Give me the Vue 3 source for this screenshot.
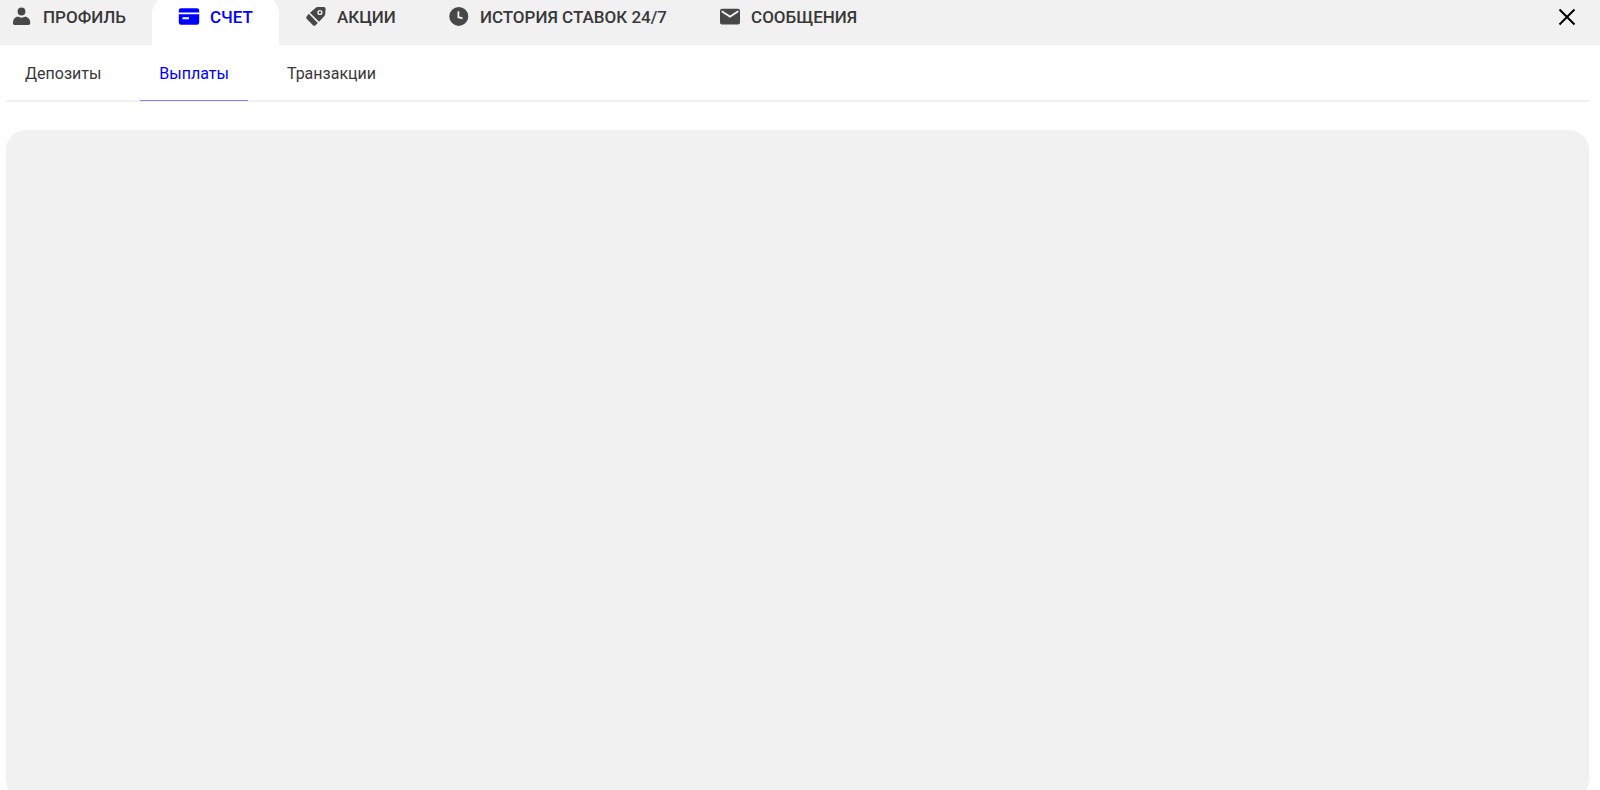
<template>
  <div class="account">
    <header class="header">
      <nav class="tabs">
        <a
          v-for="tab in tabs"
          :key="tab.id"
          href="#"
          class="tab"
          :class="{ active: tab.id === activeTab }"
          @click.prevent="activeTab = tab.id"
        >
          <svg class="tab-icon" viewBox="0 0 22 22" aria-hidden="true">
            <path :d="tab.icon" fill="currentColor" fill-rule="evenodd" />
          </svg>
          <span>{{ tab.label }}</span>
        </a>
      </nav>
      <button type="button" class="close" aria-label="Закрыть">
        <svg viewBox="0 0 18 18" aria-hidden="true">
          <path d="M1.5 1.5l15 15M16.5 1.5l-15 15" fill="none" stroke="currentColor" stroke-width="2" />
        </svg>
      </button>
    </header>

    <main class="content">
      <nav class="subtabs">
        <a
          v-for="item in subtabs"
          :key="item"
          href="#"
          class="subtab"
          :class="{ active: item === activeSubtab }"
          @click.prevent="activeSubtab = item"
        >{{ item }}</a>
      </nav>
      <section class="panel"></section>
    </main>
  </div>
</template>

<script setup>
import { ref } from 'vue'

const tabs = [
  {
    id: 'profile',
    label: 'ПРОФИЛЬ',
    icon: 'M10.500 1.600a3.900 3.900 0 1 1 0 7.800a3.900 3.900 0 0 1 0-7.800zM6.600 10.600Q10.500 12.800 14.400 10.600Q19.300 12 19.300 17.200Q19.300 19 17.500 19H3.700Q1.900 19 1.900 17.200Q1.900 12 6.600 10.600z'
  },
  {
    id: 'account',
    label: 'СЧЕТ',
    icon: 'M3 2.200h16q2.200 0 2.200 2.200v2h-20.400v-2q0-2.200 2.200-2.200zM.8 8.200h20.400v8.300q0 2.200-2.200 2.200h-16q-2.200 0-2.200-2.200zM4.500 11.200v2h6.500v-2z'
  },
  {
    id: 'promo',
    label: 'АКЦИИ',
    icon: 'M12.500 1L19 .9Q20.600 .9 20.600 2.500L20.200 8.200Q20 9.500 19 10.500L14 15.800L5 6.800L10.500 2Q11.500 1.100 12.500 1zM14.900 3.900a2.600 2.600 0 1 0 0 5.200a2.600 2.600 0 0 0 0-5.200zM14.900 5.300a1.200 1.200 0 1 1 0 2.400a1.200 1.200 0 0 1 0-2.400zM3.800 7.800L12.800 17L10.500 19.300Q9.300 20.400 8 19.300L1.600 12.700Q.7 11.600 1.600 10.400z'
  },
  {
    id: 'history',
    label: 'ИСТОРИЯ СТАВОК 24/7',
    icon: 'M10.800 .9a9.500 9.500 0 1 1 0 19a9.500 9.500 0 0 1 0-19zM9.500 5.200v6.700l5 1.300v-1.900l-3.200-.9v-5.200z'
  },
  {
    id: 'messages',
    label: 'СООБЩЕНИЯ',
    icon: 'M3 2.800H19q2 0 2 2V16.500q0 2-2 2H3q-2 0-2-2V4.800q0-2 2-2zM2.800 4.300L2.500 6.200l8.500 5.600L19.500 6.200L19.200 4.300L11 9.600z'
  }
]

const subtabs = ['Депозиты', 'Выплаты', 'Транзакции']

const activeTab = ref('account')
const activeSubtab = ref('Выплаты')
</script>

<style>
body {
  margin: 0;
  background: #fff;
}
</style>

<style scoped>
.account {
  display: flex;
  flex-direction: column;
  height: 100vh;
  overflow: hidden;
  font-family: Roboto, "Liberation Sans", sans-serif;
  font-size: 16px;
  line-height: 20px;
  color: #383838;
}

.header {
  display: flex;
  flex-shrink: 0;
  justify-content: space-between;
  height: 45px;
  padding-right: 24px;
  background: #f1f1f1;
}

.tabs {
  display: flex;
}

.tab {
  display: flex;
  align-items: center;
  gap: 10px;
  box-sizing: border-box;
  height: 51px;
  margin-top: -6px;
  padding: 0 26px 5px;
  border-radius: 20px 20px 0 0;
  font-size: 17px;
  font-weight: 500;
  color: inherit;
  text-decoration: none;
  white-space: nowrap;
}

/* the first tab sits close to the window edge */
.tab:first-child {
  padding-left: 11px;
}

.tab.active {
  background: #fff;
  color: #0000ff;
}

.tab-icon {
  flex-shrink: 0;
  width: 22px;
  height: 22px;
  color: #484848;
}

.tab.active .tab-icon {
  color: inherit;
}

.close {
  display: flex;
  align-items: center;
  height: 34px;
  padding: 0;
  border: 0;
  background: none;
  color: #000;
  cursor: pointer;
}

.close svg {
  width: 18px;
  height: 18px;
}

.content {
  display: flex;
  flex: 1;
  flex-direction: column;
  padding: 0 11px 0 6px;
}

.subtabs {
  display: flex;
  gap: 20px;
  height: 55px;
  border-bottom: 2px solid #f1f1f1;
}

.subtab {
  box-sizing: border-box;
  height: 56px;
  padding: 19px 19px 0;
  border-bottom: 1px solid transparent;
  color: inherit;
  text-decoration: none;
}

.subtab.active {
  border-bottom-color: #8080ff;
  color: #0000ff;
}

/* runs past the bottom edge of the window */
.panel {
  flex: 1;
  margin: 28px 0 -10px;
  border-radius: 20px;
  background: #f1f1f1;
}
</style>
